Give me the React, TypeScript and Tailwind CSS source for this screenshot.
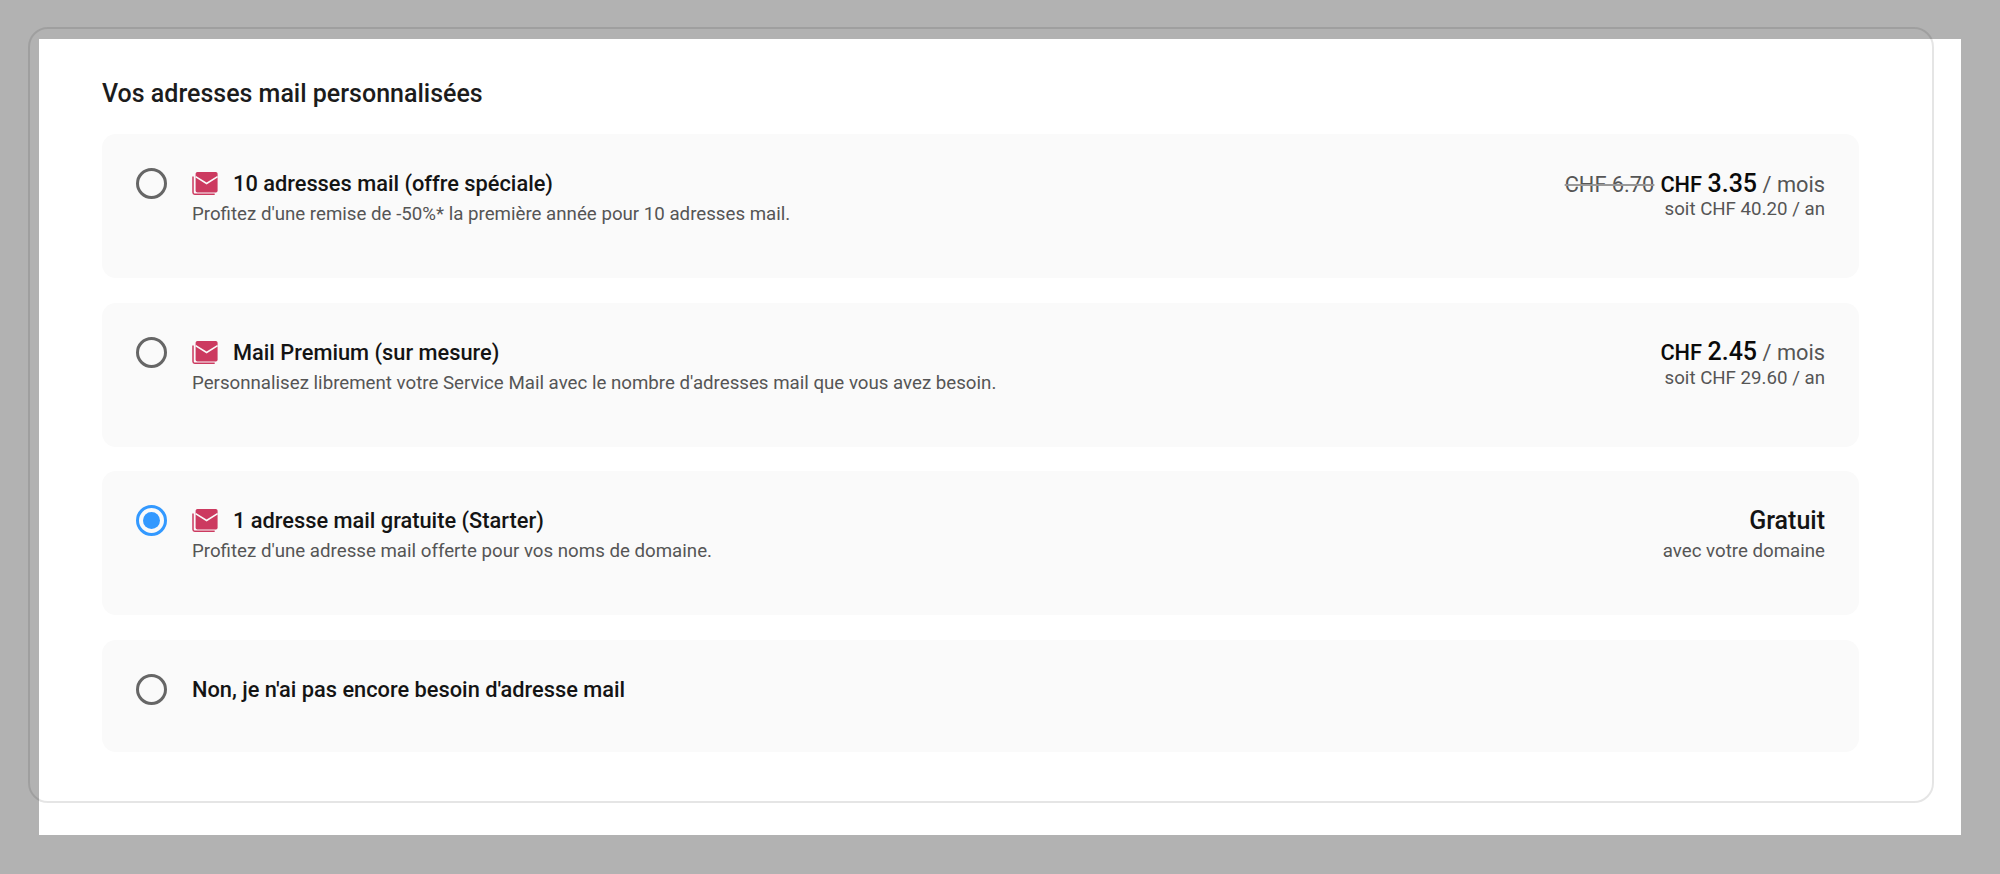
const plans = [
  {
    title: "10 adresses mail (offre spéciale)",
    desc: "Profitez d'une remise de -50%* la première année pour 10 adresses mail.",
    oldPrice: "CHF 6.70",
    price: "3.35",
    sub: "soit CHF 40.20 / an",
  },
  {
    title: "Mail Premium (sur mesure)",
    desc: "Personnalisez librement votre Service Mail avec le nombre d'adresses mail que vous avez besoin.",
    price: "2.45",
    sub: "soit CHF 29.60 / an",
  },
  {
    title: "1 adresse mail gratuite (Starter)",
    desc: "Profitez d'une adresse mail offerte pour vos noms de domaine.",
    free: true,
    selected: true,
    sub: "avec votre domaine",
  },
];

function Radio({ selected }: { selected?: boolean }) {
  if (selected) {
    return (
      <span className="flex h-[31px] w-[31px] shrink-0 items-center justify-center rounded-full border-[3px] border-[#3399ff]">
        <span className="h-[17px] w-[17px] rounded-full bg-[#3399ff]" />
      </span>
    );
  }
  return <span className="h-[31px] w-[31px] shrink-0 rounded-full border-[3px] border-[#666666]" />;
}

function MailIcon() {
  return (
    <svg width="26" height="23" viewBox="0 0 26 23" className="shrink-0">
      <path d="M1 4.5V20.5a1.7 1.7 0 0 0 1.7 1.7h20" fill="none" stroke="#cc3a60" strokeWidth="1.5" />
      <rect x="3.6" y="0" width="22" height="20.6" rx="1.8" fill="#cc3a60" />
      <path d="M3.6 4.6l11 6.9 11-6.9" fill="none" stroke="#fafafa" strokeWidth="1.6" />
    </svg>
  );
}

export default function App() {
  return (
    <div className="min-h-screen bg-[#b2b2b2] p-[39px] font-['Roboto',sans-serif]">
      <div className="relative h-[796px] w-[1922px] bg-white pl-[63px] pr-[102px] pt-[36px]">
        {/* card outline sits offset from the white box */}
        <div className="pointer-events-none absolute left-[-11px] top-[-12px] h-[776px] w-[1906px] rounded-[20px] border-2 border-black/10" />

        <h2 className="mb-[22px] text-[25px] font-medium leading-[37px] text-[#1c1c1c]">
          Vos adresses mail personnalisées
        </h2>

        <div className="flex flex-col gap-[24.5px]">
          {plans.map((p) => (
            <div key={p.title} className="flex h-[144px] justify-between rounded-[14px] bg-[#fafafa] px-[34px] pt-[34px]">
              <div className="flex">
                <Radio selected={p.selected} />
                <div className="ml-[25px]">
                  <div className="flex h-[31px] items-center gap-[15px]">
                    <MailIcon />
                    <span className="relative top-[1px] text-[21.8px] font-medium text-[#141414]">{p.title}</span>
                  </div>
                  <p className="mt-[2px] text-[18.7px] leading-[26px] text-[#555555]">{p.desc}</p>
                </div>
              </div>
              <div className="text-right">
                <div className="flex h-[31px] items-center justify-end">
                  {p.free ? (
                    <span className="text-[25px] font-medium text-[#141414]">Gratuit</span>
                  ) : (
                    <span className="whitespace-pre text-[21.8px] text-[#555555]">
                      {p.oldPrice && (
                        <span className="mr-[6px] line-through decoration-[#999999] decoration-[1.5px]">{p.oldPrice}</span>
                      )}
                      <span className="font-medium text-[#0a0a0a]">
                        CHF <span className="text-[25px]">{p.price}</span>
                      </span>{" "}
                      / mois
                    </span>
                  )}
                </div>
                <p className={`text-[18.7px] leading-[22px] text-[#555555] ${p.free ? "mt-[4px]" : "-mt-[1px]"}`}>{p.sub}</p>
              </div>
            </div>
          ))}

          <div className="flex h-[112px] rounded-[14px] bg-[#fafafa] px-[34px] pt-[34px]">
            <Radio />
            <span className="ml-[25px] text-[21.8px] font-medium leading-[31px] text-[#141414]">
              Non, je n'ai pas encore besoin d'adresse mail
            </span>
          </div>
        </div>
      </div>
    </div>
  );
}
